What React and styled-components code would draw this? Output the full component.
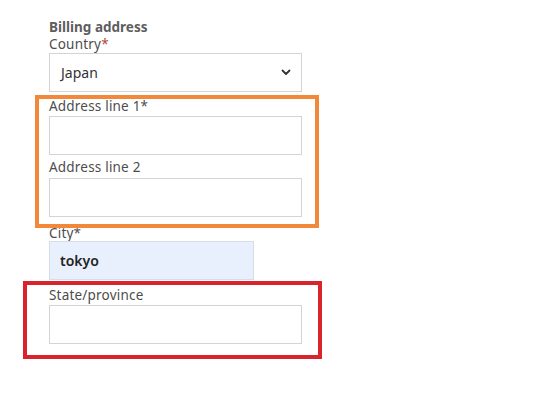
import styled, { createGlobalStyle } from 'styled-components';

const GlobalStyle = createGlobalStyle`
  body {
    margin: 0;
    background: #fff;
    font-family: "Noto Sans", Lato, Arial, sans-serif;
  }
`;

const Form = styled.form`
  display: flex;
  flex-direction: column;
  width: 253px;
  padding: 18px 0 0 49px;
`;

const Heading = styled.div`
  font-size: 13.5px;
  line-height: 18px;
  font-weight: 700;
  color: #5e5e5e;
`;

const Field = styled.div`
  display: flex;
  flex-direction: column;
  margin-top: ${(p) => p.$top || 0}px;
`;

const Label = styled.label`
  font-size: 13.5px;
  letter-spacing: 0.2px;
  line-height: ${(p) => p.$lh || 16}px;
  color: #4d4d4d;
  margin-bottom: ${(p) => p.$gap ?? 2}px;
`;

const Req = styled.span`
  color: ${(p) => p.$red ? '#b8413a' : '#4d4d4d'};
`;

const SelectBox = styled.div`
  display: flex;
  align-items: center;
  justify-content: space-between;
  height: 39px;
  box-sizing: border-box;
  border: 1px solid #d4d4d4;
  padding: 0 10px 0 11px;
  font-size: 14px;
  color: #333;
`;

const Input = styled.input`
  box-sizing: border-box;
  height: 39px;
  width: ${(p) => p.$width || 253}px;
  border: 1px solid ${(p) => p.$filled ? '#d6dde8' : '#d4d4d4'};
  background: ${(p) => p.$filled ? '#e8f0fe' : '#fff'};
  padding: 0 10px;
  font-family: inherit;
  font-size: 14px;
  font-weight: 600;
  color: #222;
  outline: none;
`;

const Group = styled.div`
  position: relative;
  display: flex;
  flex-direction: column;
  margin-top: ${(p) => p.$top || 0}px;
`;

const Marker = styled.div`
  position: absolute;
  z-index: 2;
  pointer-events: none;
  box-sizing: border-box;
  border: 4px solid ${(p) => p.$color};
  top: ${(p) => p.$inset[0]}px;
  right: ${(p) => p.$inset[1]}px;
  bottom: ${(p) => p.$inset[2]}px;
  left: ${(p) => p.$inset[3]}px;
`;

const Hint = styled.div`
  margin-top: 16px;
  height: 3px;
  overflow: hidden;
  font-size: 13px;
  line-height: 16px;
  color: #c9c9c9;
  padding-left: 3px;
`;

const Chevron = () => (
  <svg width="10" height="7" viewBox="0 0 10 7">
    <path d="M1.5 1.5 L5 5 L8.5 1.5" fill="none" stroke="#333" strokeWidth="1.8" strokeLinecap="round" strokeLinejoin="round" />
  </svg>
);

export default function App() {
  return (
    <>
      <GlobalStyle />
      <Form>
        <Heading>Billing address</Heading>
        <Field>
          <Label $lh={17} $gap={0}>Country<Req $red>*</Req></Label>
          <SelectBox>
            <span>Japan</span>
            <Chevron />
          </SelectBox>
        </Field>

        <Group $top={6}>
          <Marker $color="#f2893a" $inset={[-3, -17, -11, -14]} />
          <Field>
            <Label>Address line 1<Req>*</Req></Label>
            <Input />
          </Field>
          <Field $top={4}>
            <Label $gap={3}>Address line 2</Label>
            <Input />
          </Field>
        </Group>

        <Field $top={8}>
          <Label $gap={0}>City<Req>*</Req></Label>
          <Input $filled $width={205} defaultValue="tokyo" />
        </Field>

        <Group $top={7}>
          <Marker $color="#d9232d" $inset={[-6, -20, -15, -26]} />
          <Field>
            <Label>State/province</Label>
            <Input />
          </Field>
        </Group>

        <Hint>Could be left empty if not needed</Hint>
      </Form>
    </>
  );
}
